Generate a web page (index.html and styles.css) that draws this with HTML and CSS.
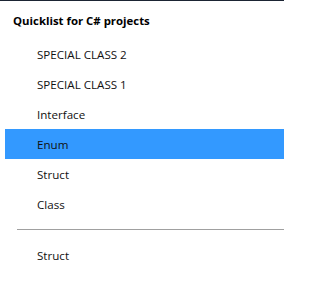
FILE: index.html
```html
<!DOCTYPE html>
<html>
<head>
<meta charset="utf-8">
<link rel="stylesheet" href="styles.css">
</head>
<body>
<div class="menu">
  <div class="title">Quicklist for C# projects</div>
  <ul class="list">
    <li class="item">SPECIAL CLASS 2</li>
    <li class="item">SPECIAL CLASS 1</li>
    <li class="item">Interface</li>
    <li class="item selected">Enum</li>
    <li class="item">Struct</li>
    <li class="item">Class</li>
  </ul>
  <div class="separator"></div>
  <ul class="list">
    <li class="item">Struct</li>
  </ul>
</div>
</body>
</html>
```

FILE: styles.css
```css
html, body {
  margin: 0;
  padding: 0;
  background: #ffffff;
}
.menu {
  width: 284px;
  height: 290px;
  box-sizing: border-box;
  border-top: 1px solid #1b2433;
  font-family: "Open Sans", "Noto Sans", sans-serif;
  font-size: 11.6px;
  color: #111111;
}
.title {
  font-weight: 700;
  font-size: 11.4px;
  padding: 6px 13px 4px;
  line-height: 28px;
  color: #000000;
}
.list {
  list-style: none;
  margin: 0;
  padding: 0;
}
.item {
  margin-left: 5px;
  padding-left: 32px;
  padding-top: 2px;
  box-sizing: border-box;
  height: 30px;
  line-height: 28px;
}
.item.selected {
  background: #3399ff;
}
.separator {
  margin: 10px 0 10px 17px;
  height: 1px;
  background: #a0a0a0;
}
```
